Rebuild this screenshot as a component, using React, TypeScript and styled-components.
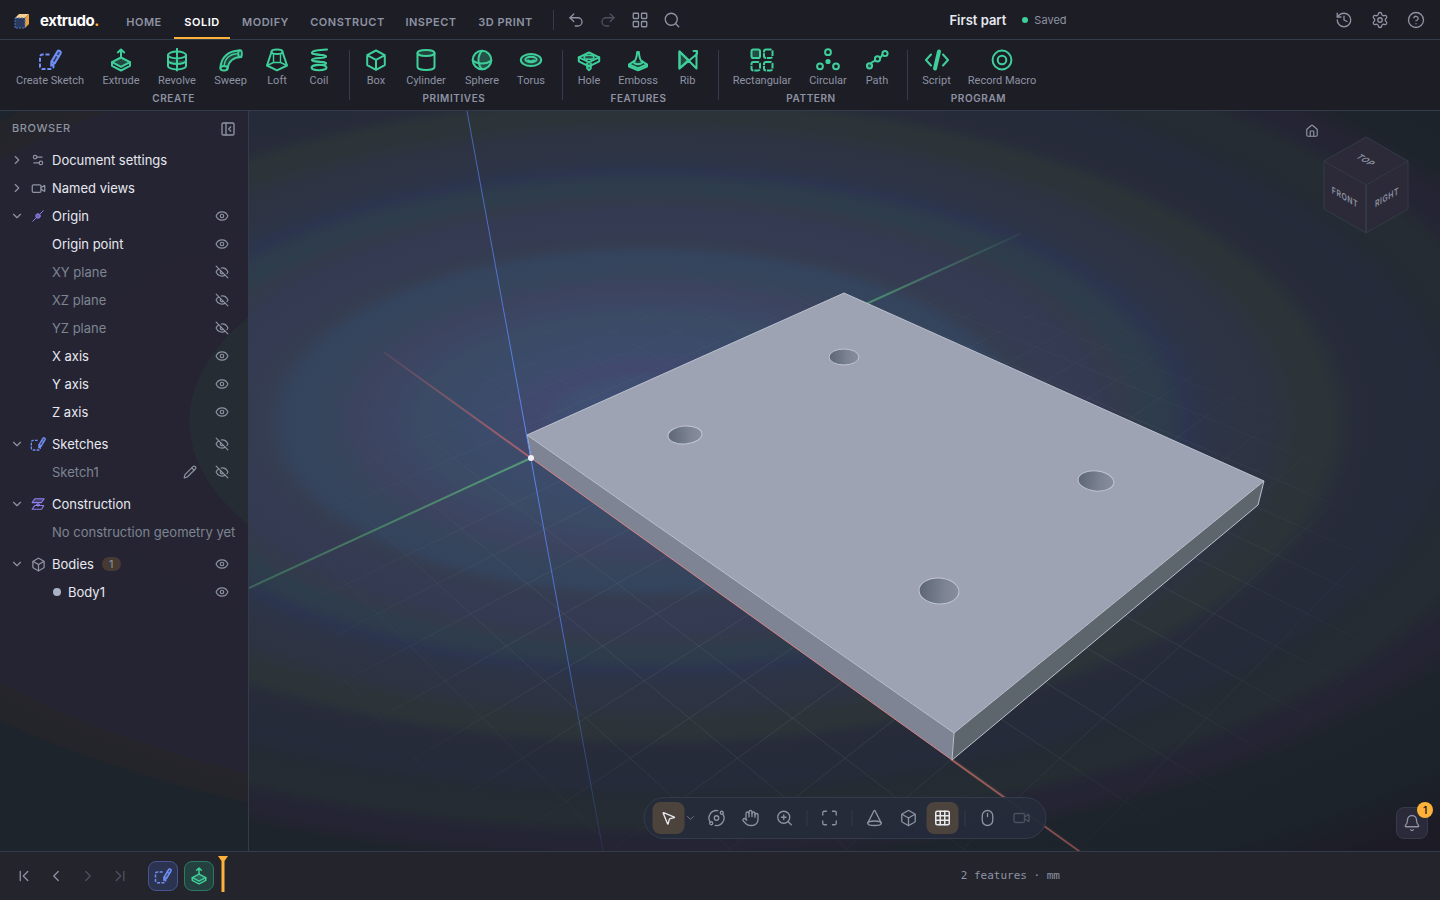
import React from "react";
import styled, { createGlobalStyle, css } from "styled-components";
import {
  Bell, Box, ChevronDown, ChevronFirst, ChevronLast, ChevronLeft, ChevronRight, CircleHelp, Cone, Eye, EyeOff,
  Grid3x3, Hand, History, House, LayoutGrid, Maximize, Mouse, MousePointer2, Orbit, PanelLeftClose, Pencil,
  Redo2, Search, Settings, Settings2, Undo2, Video, ZoomIn,
} from "lucide-react";

const c = {
  bar: "#1d1d26",
  line: "#343b4a",
  text: "#e6e9f0",
  muted: "#8d93a2",
  dim: "#4d515f",
  green: "#3ecf9a",
  blue: "#6f90f6",
  violet: "#8d80f0",
  amber: "#ffb23a",
  amberSoft: "#4d433d",
};

const GlobalStyle = createGlobalStyle`
  *, *::before, *::after { box-sizing: border-box; }
  html, body, #root { height: 100%; }
  body {
    margin: 0;
    background: ${c.bar};
    color: ${c.text};
    font-family: Inter, "Liberation Sans", sans-serif;
    font-size: 13px;
    overflow: hidden;
  }
  button { font: inherit; color: inherit; background: none; border: 0; padding: 0; margin: 0; cursor: pointer; }
  ul { list-style: none; margin: 0; padding: 0; }
  svg { display: block; flex: none; }
`;

const Shell = styled.div`
  display: flex;
  flex-direction: column;
  height: 100%;
  min-height: 600px;
`;

/* ---------- Header ---------- */

const Header = styled.header`
  display: flex;
  align-items: stretch;
  height: 40px;
  flex: none;
  padding: 0 8px 0 14px;
  background: ${c.bar};
  border-bottom: 1px solid ${c.line};
`;

const Brand = styled.a`
  display: flex;
  align-items: center;
  gap: 10px;
  width: 102px;
  color: #fff;
  font-size: 15px;
  font-weight: 700;
  letter-spacing: -0.4px;
  text-decoration: none;
  padding-top: 2px;
  span span { color: ${c.amber}; }
`;

const Tabs = styled.nav`
  display: flex;
  gap: 2px;
`;

const Tab = styled.a<{ $w: number; $active?: boolean }>`
  display: flex;
  align-items: center;
  justify-content: center;
  width: ${(p) => p.$w}px;
  height: 39px;
  padding-top: 7px;
  border-bottom: 2px solid ${(p) => (p.$active ? c.amber : "transparent")};
  color: ${(p) => (p.$active ? "#fff" : c.muted)};
  font-size: 11px;
  font-weight: 600;
  letter-spacing: 0.5px;
  white-space: nowrap;
  text-decoration: none;
`;

const Rule = styled.span`
  width: 1px;
  height: 20px;
  margin: 0 6px 0 10px;
  align-self: center;
  background: ${c.line};
`;

const IconButton = styled.button<{ $size?: number; $dim?: boolean; $on?: boolean }>`
  display: flex;
  align-items: center;
  justify-content: center;
  flex: none;
  width: ${(p) => p.$size ?? 32}px;
  height: ${(p) => p.$size ?? 32}px;
  align-self: center;
  border-radius: 8px;
  color: ${(p) => (p.$on ? c.text : p.$dim ? c.dim : c.muted)};
  background: ${(p) => (p.$on ? c.amberSoft : "transparent")};
`;

const Title = styled.div`
  display: flex;
  align-items: center;
  justify-content: center;
  flex: 1;
  h1 { margin: 0; font-size: 13px; font-weight: 600; }
`;

const Saved = styled.span`
  display: flex;
  align-items: center;
  gap: 6px;
  margin-left: 16px;
  color: ${c.muted};
  font-size: 11px;
  &::before { content: ""; width: 6px; height: 6px; border-radius: 50%; background: ${c.green}; }
`;

const Actions = styled.div`
  display: flex;
  gap: 4px;
`;

/* ---------- Ribbon ---------- */

const Ribbon = styled.div`
  display: flex;
  flex: none;
  height: 71px;
  padding-left: 2px;
  background: ${c.bar};
  border-bottom: 1px solid ${c.line};
`;

const Group = styled.section`
  display: flex;
  flex-direction: column;
  position: relative;
  padding: 8px 10px 0 6px;
  & + & { padding-left: 7px; }
  & + &::before { content: ""; position: absolute; left: 0; top: 10px; height: 50px; width: 1px; background: ${c.line}; }
  h2 {
    margin: 0;
    text-align: center;
    color: ${c.muted};
    font-size: 10px;
    line-height: 12px;
    font-weight: 600;
    letter-spacing: 0.6px;
  }
`;

const Tools = styled.div`
  display: flex;
  gap: 2px;
  height: 44px;
`;

const Tool = styled.button<{ $w: number; $color?: string }>`
  display: flex;
  flex-direction: column;
  align-items: center;
  gap: 1px;
  width: ${(p) => p.$w}px;
  color: ${(p) => p.$color ?? c.green};
  span { color: ${c.muted}; font-family: Roboto, "Liberation Sans", sans-serif; font-size: 11px; line-height: 16px; white-space: nowrap; }
`;

/* ---------- Browser panel ---------- */

const Main = styled.main`
  display: flex;
  flex: 1;
  min-height: 0;
`;

const Sidebar = styled.aside`
  width: 249px;
  flex: none;
  border-right: 1px solid ${c.line};
  background: radial-gradient(1000px 462px at 648px 310px,
    #252c33 45.8%, #262433 45.9%, #252433 86%, #25252b 86.2%, #24242b 91.6%, #1e242b 91.8%);
`;

const PanelHead = styled.div`
  display: flex;
  align-items: center;
  justify-content: space-between;
  height: 35px;
  padding: 0 12px;
  h2 { margin: 0 0 2px; color: ${c.muted}; font-size: 11px; line-height: 14px; font-weight: 500; letter-spacing: 0.6px; }
`;

const Row = styled.li<{ $gap?: boolean; $faded?: boolean }>`
  display: grid;
  grid-template-columns: 18px 24px 1fr auto;
  align-items: center;
  height: 28px;
  margin-top: ${(p) => (p.$gap ? 4 : 0)}px;
  padding: 0 14px 0 8px;
  color: ${(p) => (p.$faded ? "#7d8492" : c.text)};
`;

const RowIcon = styled.span<{ $color?: string }>`
  display: flex;
  justify-content: center;
  color: ${(p) => p.$color ?? c.muted};
`;

const RowLabel = styled.span`
  display: flex;
  align-items: center;
  padding-left: 2px;
  white-space: nowrap;
`;

const RowActions = styled.span`
  display: flex;
  gap: 8px;
`;

const Count = styled.span`
  margin-left: 8px;
  width: 19px;
  height: 14px;
  border-radius: 7px;
  background: #463a33;
  color: ${c.muted};
  font-size: 11px;
  line-height: 14px;
  text-align: center;
`;

const Swatch = styled.i`
  width: 8px;
  height: 8px;
  margin: 0 7px 0 1px;
  border-radius: 50%;
  background: #a9b3c6;
`;

/* ---------- Viewport ---------- */

const Viewport = styled.section`
  position: relative;
  flex: 1;
  min-width: 0;
  overflow: hidden;
  background: radial-gradient(1000px 462px at 399px 310px,
    #3e5076 4%, #3f4e70 9%, #42486e 11%, #3d4b6b 15%, #3a4b69 19%, #3b4b65 22%, #3b4764 25%, #3c4561 27%,
    #3c435f 29%, #36455c 32%, #34445d 36%, #353d51 38.5%, #343b52 41%, #343a52 45%, #333b4b 48%,
    #2e3d4b 50%, #2d3b4c 52%, #2c354e 54%, #2d3445 57%, #2d3342 62%, #2c343a 65%, #2c3438 68%,
    #272b3a 71%, #252b3a 78%, #252b33 82%, #252c32 87%, #242534 90%, #242433 93%,
    #1e242b 96%, #1c232a 108%, #1d1c26 117%);
`;

const Scene = styled.svg`
  position: absolute;
  inset: 0;
  width: 100%;
  height: 100%;
`;

const CubeWidget = styled.div`
  position: absolute;
  top: 12px;
  right: 30px;
  display: flex;
  align-items: flex-start;
  gap: 2px;
  button { align-self: flex-start; }
  .cube { margin-top: 12px; }
`;

const ViewBar = styled.div`
  position: absolute;
  left: 50%;
  bottom: 12px;
  transform: translateX(-50%);
  display: flex;
  align-items: center;
  gap: 2px;
  height: 42px;
  padding: 0 8px;
  border: 1px solid ${c.line};
  border-radius: 21px;
  background: #252b3af2;
`;

const BarRule = styled.span`
  width: 1px;
  height: 16px;
  margin: 0 4px;
  background: ${c.line};
`;

const MoreButton = styled.button`
  display: flex;
  align-items: center;
  width: 14px;
  height: 32px;
  margin-left: -2px;
  color: #6d7282;
`;

const Notify = styled.button`
  position: absolute;
  right: 12px;
  bottom: 12px;
  display: flex;
  align-items: center;
  justify-content: center;
  width: 32px;
  height: 32px;
  border: 1px solid ${c.line};
  border-radius: 8px;
  background: #2b2a3a;
  color: ${c.muted};
  span {
    position: absolute;
    top: -6px;
    right: -6px;
    width: 16px;
    height: 16px;
    border-radius: 8px;
    background: ${c.amber};
    color: #1d1d26;
    font-size: 10px;
    line-height: 16px;
    font-weight: 600;
  }
`;

/* ---------- Timeline ---------- */

const Timeline = styled.footer`
  display: flex;
  align-items: center;
  flex: none;
  height: 49px;
  padding: 0 380px 0 8px;
  border-top: 1px solid ${c.line};
  background: #24242d;
`;

const Features = styled.div`
  display: flex;
  align-items: center;
  gap: 6px;
  margin-left: 12px;
`;

const Feature = styled.button<{ $kind: "sketch" | "solid" }>`
  display: flex;
  align-items: center;
  justify-content: center;
  width: 30px;
  height: 30px;
  border: 1px solid;
  border-radius: 8px;
  ${(p) =>
    p.$kind === "sketch"
      ? css`color: ${c.blue}; background: #2b3350; border-color: #465592;`
      : css`color: ${c.green}; background: #24403f; border-color: #2b7a62;`}
`;

const Playhead = styled.svg`
  margin: 0 0 4px -2px;
`;

const Status = styled.span`
  margin: 0 0 2px auto;
  color: ${c.muted};
  font-family: "DejaVu Sans Mono", "Liberation Mono", monospace;
  font-size: 11px;
`;

/* ---------- Drawings ---------- */

const glyphs: Record<string, React.ReactNode> = {
  sketch: (
    <>
      <path d="M11.500 6.500H4.500a2.500 2.500 0 0 0-2.500 2.500v9.500a2.500 2.500 0 0 0 2.500 2.500h8.500a2.500 2.500 0 0 0 2.500-2.500v-1.500" strokeLinecap="butt" strokeDasharray="4 1.800" />
      <path d="M19.400 3.400a1.900 1.900 0 0 1 3.200 2l-5.800 9.800-3.600 2.600.2-4.400z" fill="currentColor" fillOpacity=".3" />
      <path d="m13.600 13.200 3.200 2M17.500 6.600l3.200 2" strokeWidth="1.600" />
    </>
  ),
  box: <path d="m12 2.500 8.800 4.600v10L12 21.800l-8.800-4.700v-10zM3.200 7.100l8.800 4.700 8.800-4.700M12 11.800v10" />,
  extrude: (
    <>
      <path d="M12 9.500V1.500M8.800 4.400 12 1.500l3.200 2.900" />
      <path d="m12 9.500 9 4.700-9 4.700-9-4.700z" fill="currentColor" fillOpacity=".25" />
      <path d="M3 14.200v3.600l9 4.700 9-4.700v-3.600" />
    </>
  ),
  revolve: (
    <>
      <path d="M12 .8v22" strokeDasharray="2.600 1.200" />
      <ellipse cx="12" cy="7" rx="9" ry="3.400" />
      <path d="M3 7v11c0 1.900 4 3.400 9 3.400s9-1.500 9-3.400V7" />
      <path d="M3 12.600c0 1.900 4 3.400 9 3.400s9-1.500 9-3.400" fill="currentColor" fillOpacity=".25" />
    </>
  ),
  sweep: (
    <>
      <path d="M1.500 19.500C2 9.500 9 3 20 2.500M22.300 9C15 9 9.500 13 8.500 20.500" />
      <path d="M1.500 19.500C2 9.500 9 3 20 2.500l2.300 6.500C15 9 9.500 13 8.500 20.500z" fill="currentColor" fillOpacity=".2" stroke="none" />
      <ellipse cx="5" cy="20.200" rx="3.600" ry="2.200" />
      <ellipse cx="21" cy="5.700" rx="1.800" ry="3.400" />
      <path d="M5.200 17C6 10.500 11 6.200 17.500 5.700" strokeWidth="1.400" />
    </>
  ),
  loft: (
    <>
      <ellipse cx="12" cy="3.800" rx="5.500" ry="2.200" />
      <path d="M6.500 4 2 17.500l10 4.800 10-4.800L17.500 4" />
      <path d="m2 17.500 6.500-3h7l6.500 3M8.500 14.500V6M15.500 14.500V6" strokeWidth="1.400" />
    </>
  ),
  coil: (
    <>
      <path d="M20 1.500C12 2 5 2.500 5 5s14 1 14 3.500S5 9 5 12s14 .5 14 3.200S5 16 5 19" />
      <ellipse cx="12" cy="19.500" rx="7.500" ry="2.800" />
      <path d="M5 5c0 2 14 1.500 14 3.500M5 12c0 2 14 1.500 14 3.500" />
    </>
  ),
  cylinder: (
    <>
      <ellipse cx="12" cy="5" rx="8.500" ry="3" fill="currentColor" fillOpacity=".2" />
      <path d="M3.500 5v14c0 1.700 3.800 3 8.500 3s8.500-1.300 8.500-3V5" />
    </>
  ),
  sphere: (
    <>
      <circle cx="12" cy="12" r="9.300" fill="currentColor" fillOpacity=".12" />
      <path d="M12 2.700c-4.700 5-4.700 13.600 0 18.600M2.700 12.500c5 4 13.600 4 18.600 0" />
      <path d="M12 2.700c-4.700 5-4.700 13.600 0 18.600a9.300 9.300 0 0 0 0-18.600z" fill="currentColor" fillOpacity=".2" stroke="none" />
    </>
  ),
  torus: (
    <>
      <ellipse cx="12" cy="12" rx="10.200" ry="6" fill="currentColor" fillOpacity=".2" />
      <ellipse cx="12" cy="11.500" rx="5.600" ry="2.800" />
      <path d="M9 12.300c1.500 1.300 4.500 1.300 6 0" />
    </>
  ),
  hole: (
    <>
      <path d="m12 4.500 10.200 4.800v4L12 18.300 1.800 13.300v-4z" />
      <path d="m1.800 9.300 10.200 4.900 10.200-4.900" />
      <ellipse cx="12" cy="9.300" rx="5" ry="2" fill="currentColor" fillOpacity=".3" strokeWidth="1.600" />
      <path d="M10 15v5.500l2 1.800 2-1.800V15" fill="currentColor" fillOpacity=".5" strokeWidth="1.600" />
    </>
  ),
  emboss: (
    <>
      <path d="m8 13-5 3.500v2L12 22.300l9-3.800v-2L16 13" fill="currentColor" fillOpacity=".2" />
      <path d="M11.200 4h1.600c.4 5.500 1.300 8.500 3.700 10.500-2.300 2.400-6.700 2.400-9 0C9.900 12.500 10.800 9.500 11.200 4z" />
      <path d="m3 16.500 9 3.800 9-3.800" />
    </>
  ),
  rib: (
    <>
      <path d="M3.500 3.500v17L21 6V3h-3.500M20.500 5v15.500L3.500 3.500" />
      <path d="M3.500 3.500v17l9-8.500z" fill="currentColor" fillOpacity=".25" />
    </>
  ),
  rectangular: (
    <>
      <rect x="1.500" y="1.500" width="8.500" height="8.500" rx="1.800" fill="currentColor" fillOpacity=".25" />
      <g strokeLinecap="butt" strokeDasharray="5.500 .9">
        <rect x="14" y="1.500" width="8.500" height="8.500" rx="2" />
        <rect x="1.500" y="14" width="8.500" height="8.500" rx="2" />
        <rect x="14" y="14" width="8.500" height="8.500" rx="2" />
      </g>
    </>
  ),
  circular: (
    <>
      <circle cx="12" cy="4.200" r="2.900" />
      <circle cx="4" cy="18.300" r="2.900" />
      <circle cx="20" cy="18.300" r="2.900" />
      <circle cx="12" cy="13.500" r="1.600" fill="currentColor" />
    </>
  ),
  path: (
    <>
      <circle cx="4.500" cy="17.800" r="2.600" fill="currentColor" fillOpacity=".3" />
      <circle cx="12.500" cy="10.800" r="2.600" />
      <circle cx="20" cy="5.500" r="2.600" />
      <path d="M6 15.500c1-2 2.500-1.500 4-3M15 9.800c1.500-1 1.500-2 2.600-3" />
    </>
  ),
  script: (
    <>
      <path d="m6 6.500-5 5.500 5 5.500M18 6.500l5 5.500-5 5.500" />
      <path d="m14 3.500-4 17" strokeWidth="4" />
    </>
  ),
  record: (
    <>
      <circle cx="12" cy="12" r="9.400" />
      <circle cx="12" cy="12" r="4.300" />
    </>
  ),
  origin: (
    <>
      <path d="m1.500 22.500 6-6M16.500 7.500l6-6" />
      <circle cx="12" cy="12" r="4.500" fill="currentColor" fillOpacity=".7" />
    </>
  ),
  construction: (
    <>
      <path d="M6.500 3h16l-4.500 6.500H2z" fill="currentColor" fillOpacity=".3" />
      <path d="M6.500 14.500H22L18 21H2z" strokeDasharray="4 1.500" />
      <path d="M12 9.500v6M9.500 13l2.500 2.500 2.500-2.500" />
    </>
  ),
};

function Glyph({ name, size }: { name: string; size: number }) {
  return (
    <svg width={size} height={size} viewBox="0 0 24 24" fill="none" stroke="currentColor" strokeWidth="2" strokeLinecap="round" strokeLinejoin="round" aria-hidden="true">
      {glyphs[name]}
    </svg>
  );
}

function Logo() {
  return (
    <svg width="16" height="16" viewBox="0 0 16 16" aria-hidden="true">
      <path d="M1 5 5 1h10l-4 4z" fill="#f6cf91" />
      <path d="m11 5 4-4v10l-4 4z" fill="#e9a13c" />
      <path d="M1 5h10v10H1z" fill="#2a3a5c" stroke="#4c73c8" strokeDasharray="2 1" />
    </svg>
  );
}

/* Projects a point of the ground plane (in grid cells) to scene coordinates. */
function project(x: number, y: number): [number, number] {
  const depth = 1 / (0.0013021 - 0.0000366 * (x - y));
  return [826.5 + (0.0503 * (x + y) - 0.385) * depth, depth - 310];
}

const gridLines: string[] = [];
for (let i = -7; i <= 17; i++) {
  const [ax, ay] = project(i, -7);
  const [bx, by] = project(i, 12);
  gridLines.push(`M${ax} ${ay}L${bx} ${by}`);
}
for (let j = -7; j <= 12; j++) {
  const [ax, ay] = project(-7, j);
  const [bx, by] = project(17, j);
  gridLines.push(`M${ax} ${ay}L${bx} ${by}`);
}

const holes = [
  { x: 844, y: 357, rx: 15, ry: 8, turn: 0 },
  { x: 685, y: 435, rx: 17, ry: 9, turn: -4 },
  { x: 1096, y: 481, rx: 18, ry: 10, turn: 6 },
  { x: 939, y: 591, rx: 20, ry: 13, turn: 3 },
];

function Model() {
  return (
    <Scene viewBox="249 111 1191 740" preserveAspectRatio="xMidYMid slice" role="img" aria-label="Plate with four holes">
      <defs>
        <radialGradient id="fade" gradientUnits="userSpaceOnUse" cx="0" cy="0" r="1" gradientTransform="translate(830 580) scale(600 330)">
          <stop offset=".5" stopColor="#fff" />
          <stop offset="1" stopColor="#000" />
        </radialGradient>
        <mask id="gridMask" maskUnits="userSpaceOnUse" x="249" y="111" width="1191" height="740">
          <rect x="249" y="111" width="1191" height="740" fill="url(#fade)" />
        </mask>
        <linearGradient id="red" gradientUnits="userSpaceOnUse" x1="385" y1="353" x2="531" y2="458">
          <stop stopColor="#a85f6c" stopOpacity=".2" />
          <stop offset="1" stopColor="#a85f6c" />
        </linearGradient>
        <linearGradient id="redNear" gradientUnits="userSpaceOnUse" x1="952" y1="760" x2="1079" y2="851">
          <stop stopColor="#a0605a" />
          <stop offset="1" stopColor="#7c474b" />
        </linearGradient>
        <linearGradient id="greenFar" gradientUnits="userSpaceOnUse" x1="866" y1="304" x2="1020" y2="234">
          <stop stopColor="#4c8a70" />
          <stop offset="1" stopColor="#4c8a70" stopOpacity="0.1" />
        </linearGradient>
        <linearGradient id="greenNear" gradientUnits="userSpaceOnUse" x1="531" y1="458" x2="249" y2="588">
          <stop stopColor="#559878" />
          <stop offset="1" stopColor="#3d6659" />
        </linearGradient>
        <linearGradient id="blue" gradientUnits="userSpaceOnUse" x1="467" y1="111" x2="603" y2="851">
          <stop stopColor="#4560ac" />
          <stop offset=".45" stopColor="#5c87f0" />
          <stop offset=".7" stopColor="#4a6cc8" />
          <stop offset="1" stopColor="#33508c" stopOpacity=".3" />
        </linearGradient>
        <linearGradient id="bore">
          <stop stopColor="#5f6673" />
          <stop offset=".3" stopColor="#6b7484" />
          <stop offset=".6" stopColor="#7b8291" />
          <stop offset="1" stopColor="#888e9d" />
        </linearGradient>
      </defs>
      <path d={gridLines.join("")} stroke="#5f7078" strokeOpacity=".26" mask="url(#gridMask)" />
      <g fill="none" strokeLinecap="round">
        <path d="M385 353 531 458" stroke="url(#red)" strokeWidth="2" />
        <path d="M952 760 1079 851" stroke="url(#redNear)" strokeWidth="2" />
        <path d="M531 458 249 588" stroke="url(#greenNear)" strokeWidth="2" />
        <path d="M866 304 1020 234" stroke="url(#greenFar)" strokeWidth="2" />
      </g>
      <path d="M527 435 954 733 952 760 531 458z" fill="#7e8493" />
      <path d="M1264 481 954 733 952 760 1258 505z" fill="#5d666d" />
      <path d="M844 293 1264 481 954 733 527 435z" fill="#9da3b3" />
      <path d="M844 293 1264 481 954 733 527 435zM527 435l4 23M954 733l-2 27 306-255 6-24" fill="none" stroke="#bcc1cf" strokeLinejoin="round" />
      <path d="M531 458 952 760" stroke="#d98588" />
      {holes.map((h) => (
        <ellipse key={h.x} cx={h.x} cy={h.y} rx={h.rx} ry={h.ry} transform={`rotate(${h.turn} ${h.x} ${h.y})`} fill="url(#bore)" stroke="#c0c5d2" />
      ))}
      <path d="M467 111 603 851" stroke="url(#blue)" />
      <circle cx="531" cy="458" r="3" fill="#eef1f8" />
    </Scene>
  );
}

function ViewCube() {
  return (
    <svg className="cube" width="88" height="100" viewBox="0 0 88 100" role="img" aria-label="View cube">
      <path d="M44 2 86 26v48L44 98 2 74V26z" fill="#2c2a39" stroke="#303c44" strokeLinejoin="round" />
      <path d="M2 26l42 24 42-24" fill="none" stroke="#33404a" strokeDasharray="2 1" />
      <path d="M44 50v48" stroke="#303a44" strokeWidth="2" />
      <g fill={c.muted} fontSize="8" fontWeight="600" letterSpacing=".6" textAnchor="middle">
        <text transform="translate(44 25) rotate(30) skewX(-30)" y="3">TOP</text>
        <text transform="translate(23 62) rotate(30) skewX(30)" y="3">FRONT</text>
        <text transform="translate(65 62) rotate(-30) skewX(-30)" y="3">RIGHT</text>
      </g>
    </svg>
  );
}

/* ---------- Data ---------- */

const tabs: [string, number][] = [["HOME", 56], ["SOLID", 56], ["MODIFY", 67], ["CONSTRUCT", 93], ["INSPECT", 70], ["3D PRINT", 75]];

const ribbon: { name: string; tools: [string, string, number][] }[] = [
  { name: "CREATE", tools: [["sketch", "Create Sketch", 84], ["extrude", "Extrude", 54], ["revolve", "Revolve", 54], ["sweep", "Sweep", 49], ["loft", "Loft", 40], ["coil", "Coil", 40]] },
  { name: "PRIMITIVES", tools: [["box", "Box", 40], ["cylinder", "Cylinder", 56], ["sphere", "Sphere", 52], ["torus", "Torus", 42]] },
  { name: "FEATURES", tools: [["hole", "Hole", 40], ["emboss", "Emboss", 54], ["rib", "Rib", 41]] },
  { name: "PATTERN", tools: [["rectangular", "Rectangular", 74], ["circular", "Circular", 54], ["path", "Path", 40]] },
  { name: "PROGRAM", tools: [["script", "Script", 45], ["record", "Record Macro", 82]] },
];

type Node = {
  label: string;
  open?: boolean;
  icon?: React.ReactNode;
  color?: string;
  eye?: "on" | "off";
  faded?: boolean;
  gap?: boolean;
  edit?: boolean;
  count?: number;
  swatch?: boolean;
};

const nodes: Node[] = [
  { label: "Document settings", open: false, icon: <Settings2 size={14} /> },
  { label: "Named views", open: false, icon: <Video size={15} /> },
  { label: "Origin", open: true, icon: <Glyph name="origin" size={12} />, color: c.violet, eye: "on" },
  { label: "Origin point", eye: "on" },
  { label: "XY plane", eye: "off", faded: true },
  { label: "XZ plane", eye: "off", faded: true },
  { label: "YZ plane", eye: "off", faded: true },
  { label: "X axis", eye: "on" },
  { label: "Y axis", eye: "on" },
  { label: "Z axis", eye: "on" },
  { label: "Sketches", open: true, icon: <Glyph name="sketch" size={16} />, color: c.blue, eye: "off", gap: true },
  { label: "Sketch1", eye: "off", faded: true, edit: true },
  { label: "Construction", open: true, icon: <Glyph name="construction" size={14} />, color: c.violet, gap: true },
  { label: "No construction geometry yet", faded: true },
  { label: "Bodies", open: true, icon: <Box size={15} />, eye: "on", gap: true, count: 1 },
  { label: "Body1", eye: "on", swatch: true },
];

function TreeRow({ node }: { node: Node }) {
  return (
    <Row $gap={node.gap} $faded={node.faded}>
      {node.open === undefined ? (
        <span />
      ) : (
        <IconButton $size={18} aria-label={`Toggle ${node.label}`}>
          {node.open ? <ChevronDown size={14} /> : <ChevronRight size={14} />}
        </IconButton>
      )}
      <RowIcon $color={node.color}>{node.icon}</RowIcon>
      <RowLabel>
        {node.swatch && <Swatch />}
        {node.label}
        {node.count && <Count>{node.count}</Count>}
      </RowLabel>
      <RowActions>
        {node.edit && (
          <IconButton $size={24} aria-label={`Edit ${node.label}`}><Pencil size={14} /></IconButton>
        )}
        {node.eye && (
          <IconButton $size={24} aria-label={`Toggle visibility of ${node.label}`}>
            {node.eye === "on" ? <Eye size={14} /> : <EyeOff size={14} />}
          </IconButton>
        )}
      </RowActions>
    </Row>
  );
}

export default function App() {
  return (
    <Shell>
      <GlobalStyle />
      <Header>
        <Brand href="#">
          <Logo />
          <span>extrudo<span>.</span></span>
        </Brand>
        <Tabs aria-label="Workspaces">
          {tabs.map(([label, w]) => (
            <Tab key={label} href="#" $w={w} $active={label === "SOLID"}>{label}</Tab>
          ))}
        </Tabs>
        <Rule />
        <IconButton aria-label="Undo"><Undo2 size={18} strokeWidth={1.75} /></IconButton>
        <IconButton aria-label="Redo" $dim><Redo2 size={18} strokeWidth={1.75} /></IconButton>
        <IconButton aria-label="Apps"><LayoutGrid size={18} strokeWidth={1.75} /></IconButton>
        <IconButton aria-label="Search"><Search size={18} strokeWidth={1.75} /></IconButton>
        <Title>
          <h1>First part</h1>
          <Saved>Saved</Saved>
        </Title>
        <Actions>
          <IconButton aria-label="History"><History size={18} strokeWidth={1.75} /></IconButton>
          <IconButton aria-label="Settings"><Settings size={18} strokeWidth={1.75} /></IconButton>
          <IconButton aria-label="Help"><CircleHelp size={18} strokeWidth={1.75} /></IconButton>
        </Actions>
      </Header>

      <Ribbon>
        {ribbon.map((g) => (
          <Group key={g.name}>
            <Tools>
              {g.tools.map(([icon, label, w]) => (
                <Tool key={label} $w={w} $color={icon === "sketch" ? c.blue : undefined}>
                  <Glyph name={icon} size={24} />
                  <span>{label}</span>
                </Tool>
              ))}
            </Tools>
            <h2>{g.name}</h2>
          </Group>
        ))}
      </Ribbon>

      <Main>
        <Sidebar>
          <PanelHead>
            <h2>BROWSER</h2>
            <IconButton $size={16} aria-label="Collapse browser"><PanelLeftClose size={16} /></IconButton>
          </PanelHead>
          <ul>
            {nodes.map((n) => <TreeRow key={n.label} node={n} />)}
          </ul>
        </Sidebar>

        <Viewport>
          <Model />
          <CubeWidget>
            <IconButton $size={16} aria-label="Home view"><House size={14} /></IconButton>
            <ViewCube />
          </CubeWidget>
          <ViewBar>
            <IconButton $on aria-label="Select"><MousePointer2 size={16} /></IconButton>
            <MoreButton aria-label="Selection options"><ChevronDown size={12} /></MoreButton>
            <IconButton aria-label="Orbit"><Orbit size={18} strokeWidth={1.75} /></IconButton>
            <IconButton aria-label="Pan"><Hand size={18} strokeWidth={1.75} /></IconButton>
            <IconButton aria-label="Zoom"><ZoomIn size={18} strokeWidth={1.75} /></IconButton>
            <BarRule />
            <IconButton aria-label="Fit view"><Maximize size={18} strokeWidth={1.75} /></IconButton>
            <BarRule />
            <IconButton aria-label="Perspective"><Cone size={18} strokeWidth={1.75} /></IconButton>
            <IconButton aria-label="Display style"><Box size={18} strokeWidth={1.75} /></IconButton>
            <IconButton $on aria-label="Grid"><Grid3x3 size={18} /></IconButton>
            <BarRule />
            <IconButton aria-label="Mouse controls"><Mouse size={18} strokeWidth={1.75} /></IconButton>
            <IconButton $dim aria-label="Record view"><Video size={18} strokeWidth={1.75} /></IconButton>
          </ViewBar>
          <Notify aria-label="Notifications">
            <Bell size={18} strokeWidth={1.75} />
            <span>1</span>
          </Notify>
        </Viewport>
      </Main>

      <Timeline>
        <IconButton aria-label="Go to start"><ChevronFirst size={18} strokeWidth={1.75} /></IconButton>
        <IconButton aria-label="Step back"><ChevronLeft size={18} strokeWidth={1.75} /></IconButton>
        <IconButton $dim aria-label="Step forward"><ChevronRight size={18} strokeWidth={1.75} /></IconButton>
        <IconButton $dim aria-label="Go to end"><ChevronLast size={18} strokeWidth={1.75} /></IconButton>
        <Features>
          <Feature $kind="sketch" aria-label="Sketch1"><Glyph name="sketch" size={18} /></Feature>
          <Feature $kind="solid" aria-label="Extrude1"><Glyph name="extrude" size={18} /></Feature>
          <Playhead width="10" height="36" viewBox="0 0 10 36" aria-hidden="true">
            <path d="M0 0h10L6.500 5v31h-3V5z" fill={c.amber} />
          </Playhead>
        </Features>
        <Status>2 features · mm</Status>
      </Timeline>
    </Shell>
  );
}
